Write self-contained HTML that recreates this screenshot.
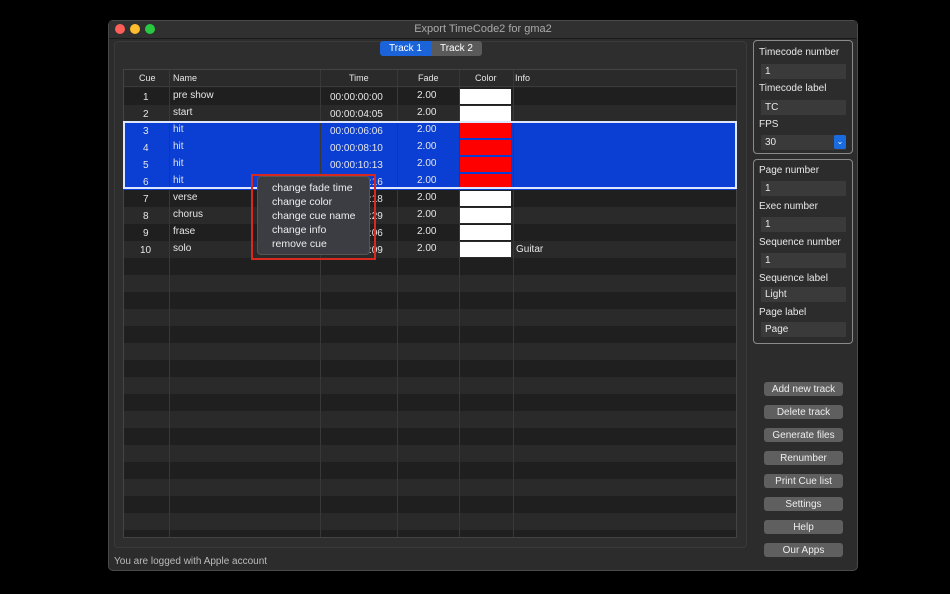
<!DOCTYPE html>
<html><head><style>
*{box-sizing:border-box;margin:0;padding:0}
body{width:950px;height:594px;background:#000;font-family:"Liberation Sans",sans-serif;position:relative;overflow:hidden;color:#ddd}
.win{position:absolute;left:108px;top:20px;width:750px;height:551px;background:#2c2c2c;border:1px solid #4a4a4a;border-radius:5px}
.title{position:absolute;left:0;top:0;width:100%;height:18px;background:#303030;border-bottom:1px solid #1a1a1a;text-align:center;font-size:11px;line-height:17px;color:#aaa}
.dot{position:absolute;top:3px;width:10px;height:10px;border-radius:50%}
.grp{position:absolute;left:5px;top:20px;width:633px;height:507px;border:1px solid #3a3a3a;background:#2e2e2e;border-radius:4px}
.tabs{position:absolute;left:380px;top:41px;height:15px;font-size:10px;display:flex}
.tabs div{padding:0 9px;line-height:15px;color:#fff}
.tbl{position:absolute;left:123px;top:69px;width:614px;height:469px;background:#222;border:1px solid #444;overflow:hidden}
.row{position:absolute;left:0;width:614px;height:17px;font-size:10px;color:#e6e6e6}
.row span{position:absolute;top:0;line-height:17px}
.vl{position:absolute;top:0;height:469px;width:1px;background:#383838}
.sw{position:absolute;left:336px;top:1px;width:51px;height:15px}
.menu{position:absolute;left:257px;top:176px;width:113px;height:79px;background:#3b3d43;border:1px solid #555;border-radius:4px;font-size:10.5px;color:#eee;padding:4px 0 0 14px;line-height:14px}
.box{position:absolute;left:753px;width:100px;border:1px solid #8a8a8a;border-radius:4px;background:#2c2c2c;font-size:10px;color:#e8e8e8}
.lb{position:absolute;left:5px}
.in{position:absolute;left:7px;width:85px;height:15px;background:#3a3a3a;padding-left:4px;line-height:16px}
.btn{position:absolute;left:764px;width:79px;height:14px;background:#5f5f5f;border-radius:3px;font-size:10px;color:#eee;text-align:center;line-height:15px}
</style></head><body>
<div class="win">
<div class="title">Export TimeCode2 for gma2</div>
<div class="dot" style="left:6px;background:#fe5f57"></div>
<div class="dot" style="left:21px;background:#febc2e"></div>
<div class="dot" style="left:36px;background:#28c840"></div>
<div class="grp"></div>
<div style="position:absolute;left:5px;top:535px;font-size:10px;color:#bbb">You are logged with Apple account</div>
</div>
<div class="tabs"><div style="background:#1a63d8;border-radius:3px 0 0 3px">Track 1</div><div style="background:#5a5a5a;border-radius:0 3px 3px 0">Track 2</div></div>
<div class="tbl">
<div class="row" style="top:0;background:#2a2a2a;font-size:9px;border-bottom:1px solid #3a3a3a"><span style="left:15px">Cue</span><span style="left:49px">Name</span><span style="left:225px">Time</span><span style="left:294px">Fade</span><span style="left:351px">Color</span><span style="left:391px">Info</span></div>
<div id="rows"></div>
<div class="vl" style="left:45px"></div><div class="vl" style="left:196px"></div><div class="vl" style="left:273px"></div><div class="vl" style="left:335px"></div><div class="vl" style="left:389px"></div>
</div>
<div style="position:absolute;left:123px;top:121px;width:614px;height:68px;border:2px solid #dfe6ff;pointer-events:none"></div>
<div style="position:absolute;left:251px;top:174px;width:125px;height:86px;border:2px solid #d8291f"></div>
<div class="menu">change fade time<br>change color<br>change cue name<br>change info<br>remove cue</div>
<div class="box" style="top:40px;height:114px">
<div class="lb" style="top:6px">Timecode number</div><div class="in" style="top:23px">1</div>
<div class="lb" style="top:42px">Timecode label</div><div class="in" style="top:59px">TC</div>
<div class="lb" style="top:78px">FPS</div><div class="in" style="top:94px">30</div>
<div style="position:absolute;left:80px;top:94px;width:12px;height:14px;background:#1a6ae0;border-radius:2px;color:#fff;font-size:8px;text-align:center;line-height:13px">&#8964;</div>
</div>
<div class="box" style="top:159px;height:185px">
<div class="lb" style="top:5px">Page number</div><div class="in" style="top:21px">1</div>
<div class="lb" style="top:41px">Exec number</div><div class="in" style="top:57px">1</div>
<div class="lb" style="top:77px">Sequence number</div><div class="in" style="top:93px">1</div>
<div class="lb" style="top:113px">Sequence label</div><div class="in" style="top:127px">Light</div>
<div class="lb" style="top:147px">Page label</div><div class="in" style="top:162px">Page</div>
</div>
<div class="btn" style="top:382px">Add new track</div>
<div class="btn" style="top:405px">Delete track</div>
<div class="btn" style="top:428px">Generate files</div>
<div class="btn" style="top:451px">Renumber</div>
<div class="btn" style="top:474px">Print Cue list</div>
<div class="btn" style="top:497px">Settings</div>
<div class="btn" style="top:520px">Help</div>
<div class="btn" style="top:543px">Our Apps</div>
<script>
var d=[["1","pre show","00:00:00:00","#fff",""],["2","start","00:00:04:05","#fff",""],["3","hit","00:00:06:06","#f00",""],["4","hit","00:00:08:10","#f00",""],["5","hit","00:00:10:13","#f00",""],["6","hit","00:00:12:16","#f00",""],["7","verse","00:00:14:18","#fff",""],["8","chorus","00:00:16:29","#fff",""],["9","frase","00:00:18:06","#fff",""],["10","solo","00:00:20:09","#fff","Guitar"]];
var h="";
for(var i=0;i<27;i++){var t=18+i*17;var sel=i>=2&&i<=5;var bg=sel?"#0b3fd3":(i%2?"#2a2a2a":"#1f1f1f");
h+='<div class="row" style="top:'+t+'px;background:'+bg+'">';
if(d[i]){var r=d[i];h+='<span style="left:'+(r[0].length>1?16:19)+'px;top:1px">'+r[0]+'</span><span style="left:49px;top:-1px">'+r[1]+'</span><span style="left:206px;top:1px">'+r[2]+'</span><span style="left:293px;top:-1px">2.00</span><div class="sw" style="background:'+r[3]+'"></div><span style="left:392px">'+r[4]+'</span>';}
h+='</div>';}
document.getElementById('rows').innerHTML=h;
</script>
</body></html>
